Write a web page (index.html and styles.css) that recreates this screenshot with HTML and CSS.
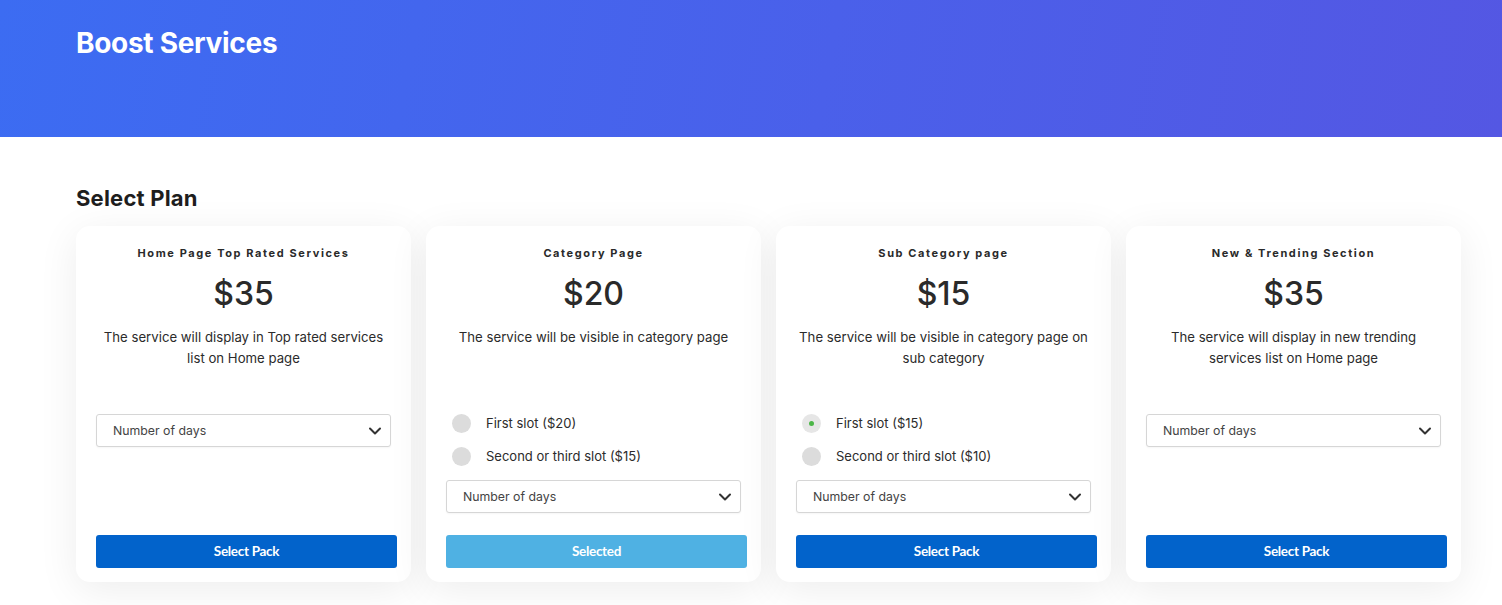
FILE: index.html
```html
<!DOCTYPE html>
<html lang="en">
<head>
<meta charset="utf-8">
<title>Boost Services</title>
<link rel="stylesheet" href="styles.css">
</head>
<body>
<header class="hero">
  <h1 class="hero-title">Boost Services</h1>
</header>
<main class="content">
  <h2 class="section-title">Select Plan</h2>
  <div class="plans">
    <div class="plan">
      <div class="plan-name">Home Page Top Rated Services</div>
      <div class="plan-price">$35</div>
      <p class="plan-desc">The service will display in Top rated services list on Home page</p>
      <div class="plan-options">
        <div class="select"><span>Number of days</span><svg class="chev" viewBox="0 0 12 8" width="12" height="8"><polyline points="1,1.5 6,6.5 11,1.5" fill="none" stroke="#333" stroke-width="2" stroke-linecap="round" stroke-linejoin="round"/></svg></div>
      </div>
      <button class="btn">Select Pack</button>
    </div>
    <div class="plan">
      <div class="plan-name">Category Page</div>
      <div class="plan-price">$20</div>
      <p class="plan-desc">The service will be visible in category page</p>
      <div class="plan-options">
        <div class="radio"><span class="dot"></span>First slot ($20)</div>
        <div class="radio"><span class="dot"></span>Second or third slot ($15)</div>
        <div class="select"><span>Number of days</span><svg class="chev" viewBox="0 0 12 8" width="12" height="8"><polyline points="1,1.5 6,6.5 11,1.5" fill="none" stroke="#333" stroke-width="2" stroke-linecap="round" stroke-linejoin="round"/></svg></div>
      </div>
      <button class="btn btn-selected">Selected</button>
    </div>
    <div class="plan">
      <div class="plan-name">Sub Category page</div>
      <div class="plan-price">$15</div>
      <p class="plan-desc">The service will be visible in category page on sub category</p>
      <div class="plan-options">
        <div class="radio"><span class="dot dot-on"></span>First slot ($15)</div>
        <div class="radio"><span class="dot"></span>Second or third slot ($10)</div>
        <div class="select"><span>Number of days</span><svg class="chev" viewBox="0 0 12 8" width="12" height="8"><polyline points="1,1.5 6,6.5 11,1.5" fill="none" stroke="#333" stroke-width="2" stroke-linecap="round" stroke-linejoin="round"/></svg></div>
      </div>
      <button class="btn">Select Pack</button>
    </div>
    <div class="plan">
      <div class="plan-name">New &amp; Trending Section</div>
      <div class="plan-price">$35</div>
      <p class="plan-desc">The service will display in new trending services list on Home page</p>
      <div class="plan-options">
        <div class="select"><span>Number of days</span><svg class="chev" viewBox="0 0 12 8" width="12" height="8"><polyline points="1,1.5 6,6.5 11,1.5" fill="none" stroke="#333" stroke-width="2" stroke-linecap="round" stroke-linejoin="round"/></svg></div>
      </div>
      <button class="btn">Select Pack</button>
    </div>
  </div>
</main>
</body>
</html>
```

FILE: styles.css
```css
* { box-sizing: border-box; }
html, body { margin: 0; padding: 0; }
body {
  background: #ffffff;
  font-family: Inter, "Noto Sans", sans-serif;
  color: #222;
  overflow: hidden;
}
.hero {
  height: 137px;
  background: linear-gradient(100deg, #3c6cf2 0%, #4a60ea 55%, #5457e3 100%);
  padding: 25px 76px 0;
}
.hero-title {
  margin: 0;
  color: #fff;
  font-size: 28px;
  line-height: 36px;
  font-weight: 700;
  letter-spacing: -0.3px;
}
.content {
  padding: 47px 41px 40px 76px;
}
.section-title {
  margin: 0 0 14px;
  font-size: 22px;
  line-height: 28px;
  font-weight: 700;
  color: #1e1e1e;
  letter-spacing: 0.2px;
}
.plans {
  display: flex;
  gap: 15px;
}
.plan {
  width: 335px;
  height: 356px;
  background: #fff;
  border-radius: 14px;
  box-shadow: 0 8px 40px rgba(0, 0, 0, 0.075);
  padding: 20px 20px 14px;
  display: flex;
  flex-direction: column;
  align-items: stretch;
  text-align: center;
}
.plan-name {
  font-size: 11px;
  line-height: 14px;
  font-weight: 700;
  letter-spacing: 1.6px;
  color: #2a2a2a;
}
.plan-price {
  margin-top: 15px;
  font-size: 32px;
  line-height: 38px;
  font-weight: 500;
  color: #2a2a2a;
}
.plan-desc {
  margin: 14px 0 0;
  min-height: 63px;
  font-size: 13.2px;
  line-height: 21px;
  color: #2b2b2b;
  padding: 0;
}
.plan-options {
  margin-top: 23px;
  display: flex;
  flex-direction: column;
  text-align: left;
}
.radio {
  display: flex;
  align-items: center;
  height: 20px;
  padding-left: 6px;
  font-size: 13px;
  color: #2b2b2b;
  margin-bottom: 13px;
}
.radio + .radio { margin-bottom: 14px; }
.dot {
  width: 19px;
  height: 19px;
  border-radius: 50%;
  background: #dcdcdc;
  margin-right: 15px;
  flex: none;
  display: flex;
  align-items: center;
  justify-content: center;
}
.dot-on { background: #e6e6e6; }
.dot-on::after {
  content: "";
  width: 5px;
  height: 5px;
  border-radius: 50%;
  background: #4cb648;
}
.select {
  height: 33px;
  border: 1px solid #d6d6d6;
  border-radius: 3px;
  background: #fff;
  display: flex;
  align-items: center;
  justify-content: space-between;
  padding: 0 9px 0 16px;
  font-size: 12.3px;
  color: #444;
  box-shadow: 0 1px 2px rgba(0,0,0,0.04);
}
.plan-options > .select:first-child { margin-top: 1px; }
.chev { display: block; }
.btn {
  margin-top: auto;
  width: calc(100% + 6px);
  height: 33px;
  border: 0;
  border-radius: 3px;
  background: #0263cb;
  color: #fff;
  font-family: Lato, "Liberation Sans", sans-serif;
  font-weight: 700;
  font-size: 13.5px;
  line-height: 33px;
  padding: 0;
  letter-spacing: -0.3px;
  cursor: pointer;
}
.btn-selected { background: #4fb1e3; }
```
